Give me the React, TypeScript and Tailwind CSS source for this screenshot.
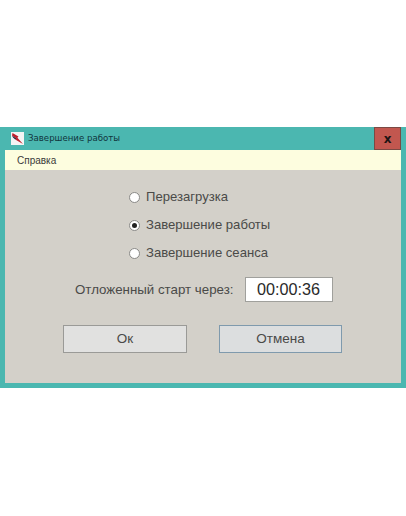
import React from 'react';

const options = [
  { label: 'Перезагрузка', checked: false },
  { label: 'Завершение работы', checked: true },
  { label: 'Завершение сеанса', checked: false },
];

const Radio: React.FC<{ label: string; checked: boolean }> = ({ label, checked }) => (
  <div className="flex h-[14px] items-center">
    <span className="flex h-[11px] w-[11px] items-center justify-center rounded-full border border-[#8a8a88] bg-white">
      {checked && <span className="h-[5px] w-[5px] rounded-full bg-[#222]" />}
    </span>
    <span className="ml-[6px] text-[13.1px] leading-none text-[#4a4a48]">{label}</span>
  </div>
);

export default function App() {
  return (
    <div className="h-[516px] w-[406px] overflow-hidden bg-white pt-[127px] font-['Liberation_Sans',sans-serif]">
      <div className="flex h-[261px] flex-col bg-[#4bb7b0] pb-[5px] pl-[5px] pr-[5px]">
        {/* title bar */}
        <div className="flex h-[23px] shrink-0 items-center pl-[6px]">
          <svg width="13" height="13" viewBox="0 0 13 13" className="shrink-0">
            <rect width="13" height="13" fill="#f4f4f4" />
            <path d="M1.5 1 L7.5 4.6 L6.4 5.8 L12 12 L4.2 7.6 L5.4 6.4 L1 3.4 Z" fill="#c0202c" />
            <path d="M1 3.4 L5.4 6.4 L4.2 7.6 L2 5.4 Z" fill="#2a2440" />
          </svg>
          <span className="ml-[4px] font-['DejaVu_Sans',sans-serif] text-[8.6px] font-medium text-[#10343c]">Завершение работы</span>
          <div className="ml-auto flex h-[23px] w-[27px] items-center justify-center border border-[#7a4a44] bg-[#c2574f] font-['DejaVu_Sans',sans-serif] text-[12px] font-bold leading-none text-[#1c1414]">
            x
          </div>
        </div>
        {/* menu bar */}
        <div className="flex h-[20px] shrink-0 items-center bg-[#fdfddf] pl-[12px] text-[10px] text-[#3a3a3a]">Справка</div>
        {/* content */}
        <div className="flex flex-1 flex-col bg-[#d3d0c9]">
          <div className="flex flex-col gap-[14px] pl-[124px] pt-[20px]">
            {options.map((o) => (
              <Radio key={o.label} label={o.label} checked={o.checked} />
            ))}
          </div>
          <div className="mt-[17px] flex items-center pl-[70px]">
            <span className="text-[13.3px] text-[#4a4a48]">Отложенный старт через:</span>
            <div className="ml-[12px] flex h-[25px] w-[88px] items-center justify-center border border-[#a0a09c] bg-white pr-[2px] text-[16.2px] text-[#2a2a2a]">
              00:00:36
            </div>
          </div>
          <div className="mt-[23px] flex gap-[32px] pl-[58px]">
            <button className="h-[28px] w-[124px] border-[1.5px] border-[#9a9a97] bg-[#e1e1e0] text-[13.5px] text-[#4a4a48]">Ок</button>
            <button className="h-[28px] w-[123px] border-[1.5px] border-[#7f9aad] bg-[#dcdedf] text-[13.5px] text-[#4a4a48]">Отмена</button>
          </div>
        </div>
      </div>
    </div>
  );
}
